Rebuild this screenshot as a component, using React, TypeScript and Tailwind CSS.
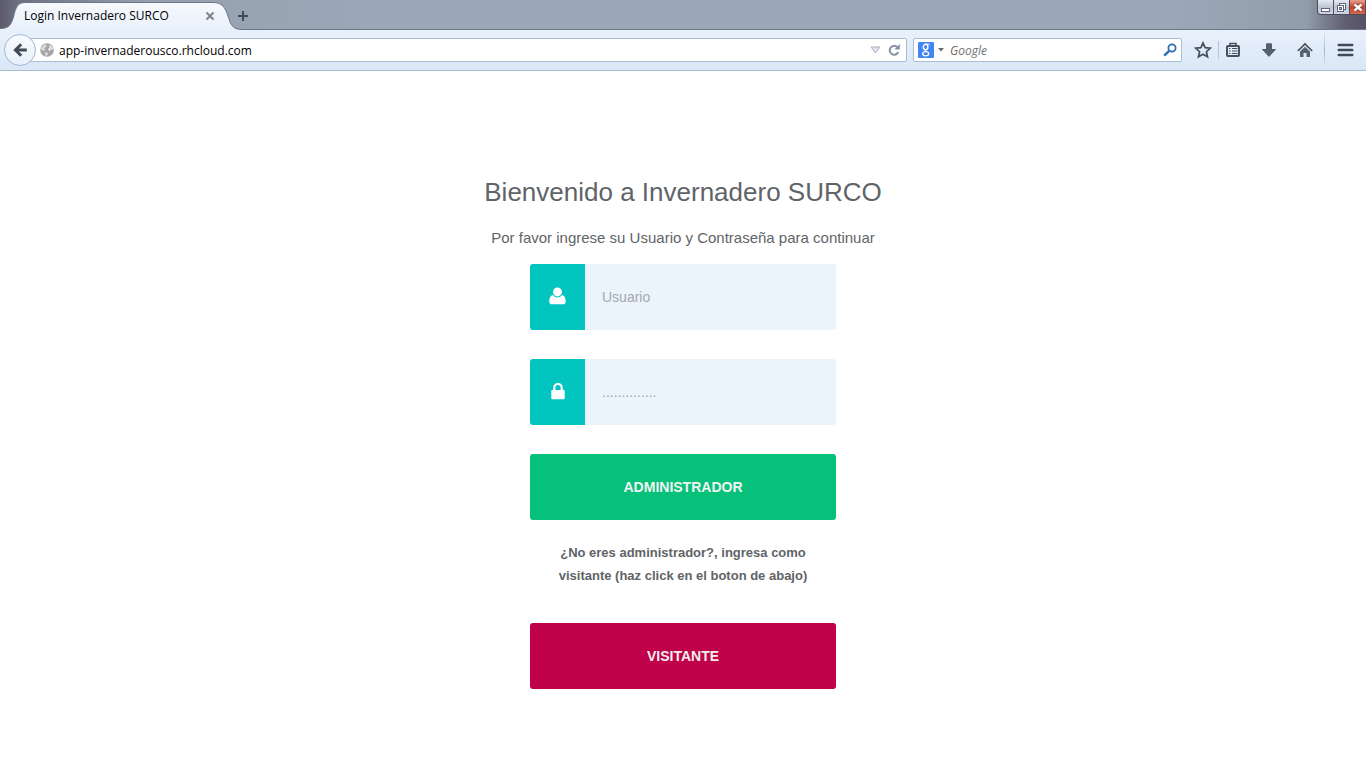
import type { ReactNode } from "react";

const chromeFont = "font-['Open_Sans','Noto_Sans',sans-serif]";

function Tab() {
  return (
    <div className="relative h-[30px] w-[229px] shrink-0">
      <svg className="absolute left-0 top-0" width="243" height="30" viewBox="0 0 243 30" aria-hidden="true">
        <defs>
          <linearGradient id="tabFill" x1="0" y1="0" x2="0" y2="1">
            <stop offset="0" stopColor="#f6f9fd" />
            <stop offset="1" stopColor="#e9f1fb" />
          </linearGradient>
        </defs>
        <path
          d="M0 30V28.500C9 28.500 11 25 13.500 17C16 7 17 2.500 26 2.500H213C222 2.500 225 7 228 16C231 25 232 29.500 242 29.500V30Z"
          fill="url(#tabFill)"
        />
        <path
          d="M0 28.500C9 28.500 11 25 13.500 17C16 7 17 2.500 26 2.500H213C222 2.500 225 7 228 16C231 25 232 29.500 243 29.500"
          fill="none"
          stroke="#6c7688"
        />
      </svg>
      <div className="relative flex h-full items-center justify-between pl-6 pr-[14px] pt-[2px]">
        <span className="whitespace-nowrap text-xs text-black">Login Invernadero SURCO</span>
        <button type="button" aria-label="Cerrar pestaña">
          <svg width="10" height="10" viewBox="0 0 10 10" fill="none" stroke="#7d8794" strokeWidth="2.200">
            <path d="M1.500 1.500l7 7M8.500 1.500l-7 7" />
          </svg>
        </button>
      </div>
    </div>
  );
}

function WindowControls() {
  return (
    <div className="flex h-[15px] overflow-hidden rounded-bl-[4px] border border-t-0 border-[#4c4d5c] bg-[#4c4d5c]">
      <button type="button" aria-label="Minimizar" className="flex w-[15px] items-center justify-center bg-linear-to-b from-[#e6ebf2] via-[#bcc6d4] to-[#ccd6e4]">
        <svg width="11" height="12" viewBox="0 0 11 12">
          <rect x="1.500" y="7.500" width="8" height="3" fill="#fff" stroke="#606577" />
        </svg>
      </button>
      <button type="button" aria-label="Restaurar" className="ml-px flex w-[15px] items-center justify-center bg-linear-to-b from-[#e6ebf2] via-[#bcc6d4] to-[#ccd6e4]">
        <svg width="11" height="12" viewBox="0 0 11 12" fill="#fff" stroke="#606577">
          <rect x="3.500" y="2.500" width="6" height="6" />
          <rect x="1.500" y="4.500" width="6" height="6" />
          <rect x="3.500" y="6.500" width="2" height="2" fill="#bcc6d4" />
        </svg>
      </button>
      <button type="button" aria-label="Cerrar" className="ml-px flex w-[15px] items-center justify-center bg-linear-to-b from-[#e5a08e] via-[#c8432a] to-[#d8654a]">
        <svg width="12" height="12" viewBox="0 0 12 12" fill="none">
          <path d="M2.500 3.500l7 6M9.500 3.500l-7 6" stroke="#6e3434" strokeWidth="4" />
          <path d="M2.500 3.500l7 6M9.500 3.500l-7 6" stroke="#fff" strokeWidth="2.400" />
        </svg>
      </button>
    </div>
  );
}

function TitleBar() {
  return (
    <div className="flex h-[30px] items-start justify-between border-b border-[#6c7688] bg-[linear-gradient(to_right,#5d5a6c_0,#6d6f80_16px,#96a1b0_150px,#9ca8b7_400px,#9ca8b7_calc(100%_-_200px),#929dac_calc(100%_-_60px),#5f5d70_calc(100%_-_20px),#565164_100%)]">
      <div className="flex items-center">
        <Tab />
        <button type="button" aria-label="Nueva pestaña" className="ml-2 mt-[2px]">
          <svg width="12" height="12" viewBox="0 0 12 12" fill="none" stroke="#3f4a56" strokeWidth="2">
            <path d="M6 1v10M1 6h10" />
          </svg>
        </button>
      </div>
      <WindowControls />
    </div>
  );
}

function Globe() {
  return (
    <svg width="14" height="14" viewBox="0 0 14 14" aria-hidden="true" className="shrink-0">
      <circle cx="7" cy="7" r="6.800" fill="#a4a4a4" />
      <path d="M2 3.500L5 1.200L7 2L6 4L4.500 5L5.500 7L4 8L2.500 7L1 7.500V5.500Z" fill="#d8d8d8" />
      <path d="M8.500 2L11 2.500L12.800 5L12.500 7L10.500 6.500L10 8.500L8 7L8.500 5L10 4Z" fill="#e4e4e4" />
      <path d="M5 9L7.500 9.500L8 11L6.500 13L5 12Z" fill="#d8d8d8" />
    </svg>
  );
}

function ToolButton({ label, children }: { label: string; children: ReactNode }) {
  return (
    <button type="button" aria-label={label} className="flex h-6 w-[18px] shrink-0 items-center justify-center">
      {children}
    </button>
  );
}

function Toolbar() {
  return (
    <div className="flex h-[41px] items-center border-b border-[#a8bdd6] bg-linear-to-b from-[#e9f1fb] to-[#d9e7f7] pl-1">
      <button
        type="button"
        aria-label="Atrás"
        className="z-10 flex size-8 shrink-0 items-center justify-center rounded-full border border-[#a3b8d0] bg-linear-to-b from-[#f8fbfe] to-[#e8f0fa]"
      >
        <svg width="14" height="14" viewBox="0 0 14 14" fill="none" stroke="#414b57" strokeWidth="3">
          <path d="M13.800 7H3M8.200 1.200L2.400 7l5.800 5.800" />
        </svg>
      </button>
      <div className="-ml-3 flex h-6 min-w-0 flex-1 items-center rounded-r-[2px] border border-[#a9bdd3] bg-white pl-[15px] pr-[6px]">
        <Globe />
        <input
          type="text"
          aria-label="Dirección"
          defaultValue="app-invernaderousco.rhcloud.com"
          className="min-w-0 flex-1 bg-transparent pl-[5px] pt-px text-xs text-black outline-none"
        />
        <button type="button" aria-label="Historial" className="mr-[7px]">
          <svg width="11" height="8" viewBox="0 0 11 8">
            <path d="M1 1h9L5.500 7Z" fill="#dfe5eb" stroke="#a8b3bf" />
          </svg>
        </button>
        <button type="button" aria-label="Recargar">
          <svg width="12" height="12" viewBox="0 0 12 12">
            <path d="M9.300 3.200A4.400 4.400 0 1 0 10.200 8" fill="none" stroke="#8593a1" strokeWidth="2" />
            <path d="M11.800 0V5.500H6.300Z" fill="#8593a1" />
          </svg>
        </button>
      </div>
      <div className="ml-[6px] flex h-6 w-[269px] shrink-0 items-center rounded-[2px] border border-[#a9bdd3] bg-white pl-1 pr-1">
        <button type="button" aria-label="Buscador" className="flex items-center gap-1">
          <svg width="16" height="16" viewBox="0 0 16 16" fill="none" stroke="#fff">
            <rect width="16" height="16" rx="1" fill="#4285f4" stroke="none" />
            <ellipse cx="7.600" cy="5" rx="2.300" ry="2.700" strokeWidth="1.400" />
            <path d="M8 2.200H11.500" strokeWidth="1" />
            <path d="M8 7.700C6.800 8.500 7.300 9.200 8.500 9.800" strokeWidth="1.300" />
            <ellipse cx="7.700" cy="11.800" rx="3" ry="2.100" strokeWidth="1.300" />
          </svg>
          <svg width="6" height="4" viewBox="0 0 6 4" fill="#6a6a6a">
            <path d="M0 0h6L3 3.500Z" />
          </svg>
        </button>
        <input
          type="text"
          aria-label="Buscar"
          placeholder="Google"
          className="min-w-0 flex-1 bg-transparent pl-[6px] pt-px text-xs italic outline-none placeholder:text-[#6f6f6f]"
        />
        <button type="button" aria-label="Ir">
          <svg width="14" height="14" viewBox="0 0 14 14" fill="none" stroke="#2c6fb3">
            <circle cx="9" cy="5" r="3.600" strokeWidth="1.800" />
            <path d="M6.200 7.800L1.200 12.600" strokeWidth="2.400" />
          </svg>
        </button>
      </div>
      <div className="flex shrink-0 items-center pl-3">
        <ToolButton label="Marcar página">
          <svg width="18" height="18" viewBox="0 0 18 18" fill="none" stroke="#46505b" strokeWidth="1.700">
            <path d="M9 2l2.100 4.700 5.100.5-3.800 3.500 1.100 5.100L9 13.200l-4.500 2.600 1.100-5.100L1.800 7.200l5.100-.5Z" />
          </svg>
        </ToolButton>
        <span className="ml-[6px] h-[18px] w-px bg-[#b4c4d6]" />
        <span className="ml-[5px] flex items-center gap-[18px]">
          <ToolButton label="Marcadores">
            <svg width="16" height="16" viewBox="0 0 16 16" fill="none" stroke="#46505b">
              <rect x="2" y="4" width="12" height="10" rx="1" strokeWidth="2" />
              <path d="M5 3V1.500h6V3" strokeWidth="1.500" />
              <path d="M4 6.500h1.500M7 6.500h5.500M4 9h1.500M7 9h5.500M4 11.500h1.500M7 11.500h5.500" strokeWidth="1" />
            </svg>
          </ToolButton>
          <ToolButton label="Descargas">
            <svg width="14" height="14" viewBox="0 0 14 14" fill="#56616d" stroke="#414b57" strokeWidth="0.800">
              <path d="M4.500 0.800h5V6.500h4L7 13.400L0.500 6.500h4Z" />
            </svg>
          </ToolButton>
          <ToolButton label="Inicio">
            <svg width="16" height="16" viewBox="0 0 16 16">
              <path d="M8 4.800L3 9.500V15h3.500v-4h3v4H13V9.500Z" fill="#56616d" />
              <path d="M0.800 9L8 2l7.200 7" fill="none" stroke="#46505b" strokeWidth="1.700" />
            </svg>
          </ToolButton>
        </span>
        <span className="ml-[10px] h-[34px] w-px bg-linear-to-b from-[#dce7f4] via-[#a5b5c7] to-[#dce7f4]" />
        <button type="button" aria-label="Menú" className="mx-3">
          <svg width="17" height="14" viewBox="0 0 17 14" fill="none" stroke="#3f4a56" strokeWidth="2.600" strokeLinecap="round">
            <path d="M1.800 2h13.400M1.800 7h13.400M1.800 12h13.400" />
          </svg>
        </button>
      </div>
    </div>
  );
}

function UserIcon() {
  return (
    <svg width="17" height="18" viewBox="0 0 17 18" fill="#fff" aria-hidden="true">
      <circle cx="8.500" cy="4.900" r="4.500" />
      <path d="M4 8C1.300 8.300 0.300 11.600 0.300 14.400C0.300 16.300 1.500 17.300 3.200 17.300H13.800C15.500 17.300 16.700 16.300 16.700 14.400C16.700 11.600 15.700 8.300 13 8C11.800 9.700 10.200 10.500 8.500 10.500S5.200 9.700 4 8Z" />
    </svg>
  );
}

function LockIcon() {
  return (
    <svg width="14" height="18" viewBox="0 0 14 18" aria-hidden="true">
      <path d="M3.300 9V5.700a3.700 3.700 0 0 1 7.400 0V9" fill="none" stroke="#fff" strokeWidth="2.200" />
      <rect x="0.300" y="8" width="13.400" height="9.200" rx="1" fill="#fff" />
    </svg>
  );
}

interface FieldProps {
  id: string;
  label: string;
  type: string;
  placeholder: string;
  icon: ReactNode;
}

function Field({ id, label, type, placeholder, icon }: FieldProps) {
  return (
    <div className="mb-[29px] flex h-[66px] overflow-hidden rounded-[3px] bg-[#ebf3fb]">
      <label htmlFor={id} aria-label={label} className="flex w-[55px] shrink-0 items-center justify-center bg-[#02c5c0] pb-[2px]">
        {icon}
      </label>
      <input
        id={id}
        type={type}
        placeholder={placeholder}
        className="min-w-0 flex-1 bg-transparent px-[17px] text-sm text-[#5f6468] outline-none placeholder:text-[#a3a9b0]"
      />
    </div>
  );
}

export default function App() {
  return (
    <div className="min-h-screen bg-white">
      <header className={chromeFont}>
        <TitleBar />
        <Toolbar />
      </header>
      <main className="flex flex-col items-center px-4 pb-16 pt-[101px] text-center font-['Liberation_Sans',Arial,sans-serif] text-[#5f6468]">
        <h1 className="text-[26px] leading-10">Bienvenido a Invernadero SURCO</h1>
        <p className="mt-[15px] text-[15px] leading-[22px]">Por favor ingrese su Usuario y Contraseña para continuar</p>
        <form className="mt-[15px] w-full max-w-[306px]" onSubmit={(e) => e.preventDefault()}>
          <Field id="usuario" label="Usuario" type="text" placeholder="Usuario" icon={<UserIcon />} />
          <Field id="clave" label="Contraseña" type="password" placeholder=".............." icon={<LockIcon />} />
          <button type="submit" className="h-[66px] w-full rounded-[3px] bg-[#06c17a] text-sm font-bold text-[#f0f3f2]">
            ADMINISTRADOR
          </button>
          <p className="mt-[21px] px-4 text-[13px] font-bold leading-[23px]">
            ¿No eres administrador?, ingresa como visitante (haz click en el boton de abajo)
          </p>
          <button type="button" className="mt-9 h-[66px] w-full rounded-[3px] bg-[#bf0249] text-sm font-bold text-[#f3eeee]">
            VISITANTE
          </button>
        </form>
      </main>
    </div>
  );
}
